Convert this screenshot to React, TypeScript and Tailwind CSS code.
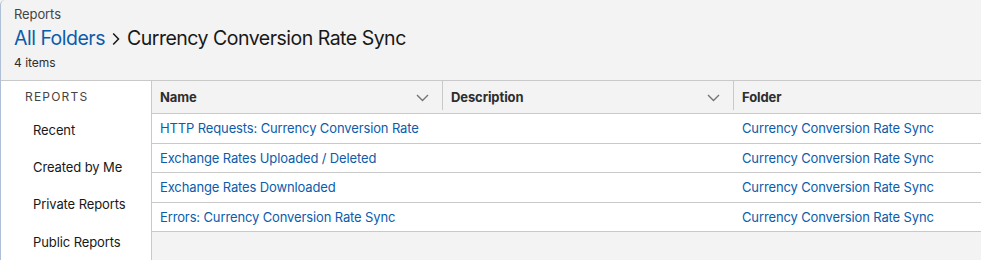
const reports = [
  "HTTP Requests: Currency Conversion Rate",
  "Exchange Rates Uploaded / Deleted",
  "Exchange Rates Downloaded",
  "Errors: Currency Conversion Rate Sync",
];

const navItems = ["Recent", "Created by Me", "Private Reports", "Public Reports"];

const Chevron = () => (
  <svg width="13" height="8" viewBox="0 0 13 8" className="mr-[14px] text-[#747474]">
    <polyline points="1,1 6.5,6.5 12,1" fill="none" stroke="currentColor" strokeWidth="1.4" />
  </svg>
);

const HeaderCell = ({ label, sortable }: { label: string; sortable?: boolean }) => (
  <div className="relative flex h-full items-center pl-2 pt-[2px] text-[13px] font-bold tracking-[-0.1px] text-[#2e2e2e]">
    <span className="flex-1">{label}</span>
    {sortable && <Chevron />}
    {sortable && <div className="absolute right-0 top-0 bottom-[3px] w-px bg-[#c9c9c9]" />}
  </div>
);

const App = () => {
  return (
    <div className="h-[260px] w-[981px] overflow-hidden bg-[#f3f3f3] font-['Inter',sans-serif] text-[#181818]">
      <div className="flex h-full flex-col rounded-tl-[5px] border-l border-[#aebfd6]">
        <header className="h-[81px] shrink-0 border-b border-[#c9c9c9] px-[13px] pt-[5px]">
          <p className="text-[13px] leading-[18px] tracking-[-0.1px] text-[#444]">Reports</p>
          <h1 className="mt-[2px] flex items-center text-[19.5px] leading-[26px] tracking-[-0.5px]">
            <a className="text-[#0b5cab]">All Folders</a>
            <svg width="8" height="14" viewBox="0 0 8 14" className="mx-[7px] mt-[1px] text-[#181818]">
              <polyline points="1.2,1.5 6.5,7 1.2,12.5" fill="none" stroke="currentColor" strokeWidth="1.5" />
            </svg>
            <span>Currency Conversion Rate Sync</span>
          </h1>
          <p className="mt-[4px] text-[12px] leading-[16px] text-[#2e2e2e]">4 items</p>
        </header>

        <div className="flex flex-1">
          <aside className="w-[151px] shrink-0 border-r border-[#c9c9c9] bg-white">
            <p className="pl-[24px] pt-[8px] text-[12px] leading-[16px] tracking-[1.2px] text-[#444]">REPORTS</p>
            <ul className="mt-[7px]">
              {navItems.map((item) => (
                <li key={item} className="flex h-[37.3px] items-center pl-[32px] text-[13px] tracking-[-0.1px] text-[#181818]">
                  {item}
                </li>
              ))}
            </ul>
          </aside>

          <main className="flex-1">
            <div className="grid h-[33px] grid-cols-[291px_291px_1fr] border-b border-[#c9c9c9]">
              <HeaderCell label="Name" sortable />
              <HeaderCell label="Description" sortable />
              <HeaderCell label="Folder" />
            </div>
            {reports.map((r) => (
              <div
                key={r}
                className="grid h-[29.6px] grid-cols-[291px_291px_1fr] items-center border-b border-[#c9c9c9] bg-white pt-[1px] text-[13px] tracking-[-0.13px] text-[#0b5cab]"
              >
                <a className="pl-2">{r}</a>
                <span />
                <a className="pl-2">Currency Conversion Rate Sync</a>
              </div>
            ))}
          </main>
        </div>
      </div>
    </div>
  );
};

export default App;
